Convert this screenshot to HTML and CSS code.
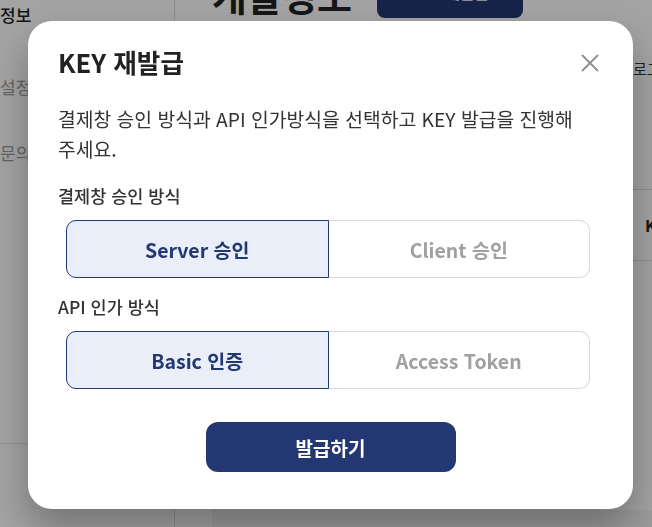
FILE: index.html
```html
<!DOCTYPE html>
<html lang="ko">
<head>
<meta charset="utf-8">
<title>KEY 재발급</title>
<link rel="stylesheet" href="styles.css">
</head>
<body>
<div class="page">
  <aside class="sidebar">
    <div class="nav-item nav-active">정보</div>
    <div class="nav-item">설정</div>
    <div class="nav-item">문의</div>
    <div class="sidebar-foot"></div>
  </aside>
  <main class="main">
    <div class="main-head">
      <h1 class="main-title">개발정보</h1>
      <div class="main-btn">KEY 재발급</div>
    </div>
    <div class="user-bar">로그아웃</div>
    <div class="table-row">KEY</div>
    <div class="footer"></div>
  </main>
</div>

<div class="overlay">
  <div class="modal">
    <div class="modal-head">
      <h2 class="modal-title">KEY 재발급</h2>
      <button class="close" aria-label="닫기">
        <svg width="18" height="18" viewBox="0 0 18 18"><path d="M1.5 1.5 L16.5 16.5 M16.5 1.5 L1.5 16.5" stroke="#8f8f8f" stroke-width="1.8" fill="none" stroke-linecap="round"/></svg>
      </button>
    </div>
    <p class="desc">결제창 승인 방식과 API 인가방식을 선택하고 KEY 발급을 진행해 주세요.</p>
    <div class="label">결제창 승인 방식</div>
    <div class="seg">
      <div class="seg-btn selected">Server 승인</div>
      <div class="seg-btn">Client 승인</div>
    </div>
    <div class="label label2">API 인가 방식</div>
    <div class="seg seg2">
      <div class="seg-btn selected">Basic 인증</div>
      <div class="seg-btn">Access Token</div>
    </div>
    <div class="actions">
      <button class="primary">발급하기</button>
    </div>
  </div>
</div>
</body>
</html>
```

FILE: styles.css
```css
* { box-sizing: border-box; }
html, body { margin: 0; padding: 0; }
body {
  width: 652px;
  height: 527px;
  overflow: hidden;
  background: #ffffff;
  font-family: "Noto Sans CJK KR", "Noto Sans", sans-serif;
  color: #222;
}
.page {
  display: flex;
  width: 652px;
  height: 527px;
  overflow: hidden;
}
.sidebar {
  width: 175px;
  flex: none;
  border-right: 1px solid #dcdcdc;
  display: flex;
  flex-direction: column;
  padding-top: 3px;
}
.nav-item {
  font-size: 17px;
  line-height: 24px;
  color: #9a9a9a;
  margin-bottom: 45px;
  white-space: nowrap;
}
.nav-item + .nav-item { margin-bottom: 42px; }
.nav-active { color: #222; font-weight: 500; margin-bottom: 48px; }
.sidebar-foot {
  margin-top: 236px;
  border-top: 1px solid #e4e4e4;
  flex: 1;
}
.main {
  flex: 1;
  padding-left: 37px;
  display: flex;
  flex-direction: column;
  min-width: 0;
  overflow: hidden;
}
.main-head {
  display: flex;
  align-items: center;
  gap: 25px;
  margin-top: -30px;
  height: 48px;
}
.main-title {
  margin: 0;
  font-size: 38px;
  line-height: 48px;
  font-weight: 700;
  color: #222;
  padding-top: 2px;
  white-space: nowrap;
}
.main-btn {
  width: 146px;
  height: 48px;
  flex: none;
  border-radius: 8px;
  background: #233873;
  color: #fff;
  font-size: 16px;
  font-weight: 700;
  display: flex;
  align-items: center;
  justify-content: center;
  padding-bottom: 4px;
  white-space: nowrap;
}
.user-bar {
  margin-top: 40px;
  margin-left: 421px;
  font-size: 15px;
  line-height: 22px;
  color: #333;
  white-space: nowrap;
}
.table-row {
  margin-top: 109px;
  height: 72px;
  border-top: 1px solid #dcdcdc;
  border-bottom: 1px solid #dcdcdc;
  padding-left: 433px;
  font-size: 16px;
  font-weight: 700;
  line-height: 70px;
  color: #222;
  white-space: nowrap;
}
.footer {
  margin-top: auto;
  height: 17px;
  background: #f4f4f4;
}

/* overlay + modal */
.overlay {
  position: fixed;
  inset: 0;
  background: rgba(0, 0, 0, 0.36);
}
.modal {
  position: absolute;
  left: 28px;
  top: 21px;
  width: 605px;
  background: #fff;
  border-radius: 24px;
  padding: 25px 30px 37px 30px;
  box-shadow: 0 20px 40px rgba(0, 0, 0, 0.3);
}
.modal-head {
  display: flex;
  justify-content: space-between;
  align-items: center;
  height: 32px;
}
.modal-title {
  margin: 0;
  font-size: 25.6px;
  line-height: 32px;
  font-weight: 700;
  color: #222;
}
.close {
  border: 0;
  background: none;
  padding: 0;
  width: 18px;
  height: 18px;
  margin-right: 4px;
  margin-top: 2px;
  display: flex;
}
.desc {
  margin: 26px 0 0 0;
  font-size: 19.3px;
  line-height: 30px;
  color: #333;
  word-break: keep-all;
}
.label {
  margin-top: 20px;
  font-size: 17.5px;
  line-height: 24px;
  font-weight: 500;
  color: #333;
}
.label2 { margin-top: 17px; }
.seg {
  margin: 12px 0 0 8px;
  width: 524px;
  height: 58px;
  display: flex;
}
.seg-btn {
  flex: 1;
  display: flex;
  align-items: center;
  justify-content: center;
  font-size: 19.5px;
  font-weight: 700;
  color: #a0a0a0;
  border: 1px solid #d9d9d9;
  border-left: 0;
  border-radius: 0 10px 10px 0;
  background: #fff;
}
.seg-btn.selected {
  color: #233873;
  background: #e9eef8;
  border: 1px solid #233873;
  border-radius: 10px 0 0 10px;
}
.actions {
  margin-top: 33px;
  display: flex;
  justify-content: center;
}
.primary {
  width: 250px;
  height: 50px;
  border: 0;
  border-radius: 12px;
  background: #233873;
  color: #fff;
  font-family: inherit;
  font-size: 19px;
  font-weight: 700;
}
```
